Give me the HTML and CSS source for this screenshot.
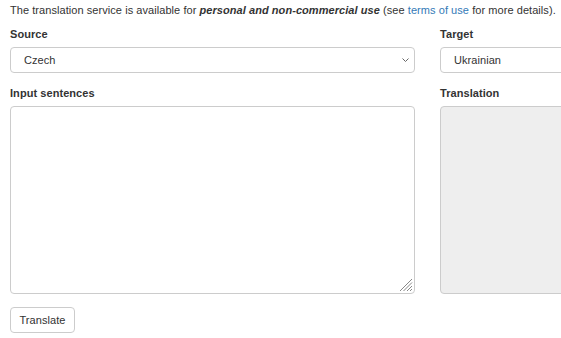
FILE: index.html
```html
<!DOCTYPE html>
<html lang="en">
<head>
    <meta charset="UTF-8">
    <title>Translation</title>
    <link rel="stylesheet" href="styles.css">
</head>
<body>
    <p class="notice">The translation service is available for <em>personal and non-commercial use</em> (see <a href="#">terms of use</a> for more details).</p>

    <div class="form-grid">
        <div class="field">
            <label for="source">Source</label>
            <div class="select-wrap">
                <select id="source" class="control">
                    <option>Czech</option>
                    <option>English</option>
                </select>
                <svg class="chevron" width="7" height="4" viewBox="0 0 7 4"><path d="M0.5 0.5 L3.5 3.5 L6.5 0.5" fill="none" stroke="#666" stroke-width="1"/></svg>
            </div>
        </div>
        <div class="field">
            <label for="target">Target</label>
            <select id="target" class="control">
                <option>Ukrainian</option>
                <option>English</option>
            </select>
        </div>
        <div class="field">
            <label for="input">Input sentences</label>
            <div class="area-wrap">
                <textarea id="input" class="control area"></textarea>
                <!-- resize grip -->
                <svg class="grip" width="14" height="14" viewBox="0 0 14 14">
                    <path d="M13 1 L1 13 M13 4.5 L4.5 13 M13 8 L8 13 M13 11 L11 13" stroke="#888" stroke-width="1" fill="none"/>
                </svg>
            </div>
        </div>
        <div class="field">
            <label>Translation</label>
            <div class="control area output"></div>
        </div>
    </div>

    <button class="btn" type="button">Translate</button>
</body>
</html>
```

FILE: styles.css
```css
body {
    font-family: "Liberation Sans", Arial, Helvetica, sans-serif;
    font-size: 11px;
    letter-spacing: 0.06px;
    color: #333;
    margin: 0;
    padding: 3px 10px 0;
    overflow: hidden;
}
.notice {
    margin: 0 0 9px;
    line-height: 15px;
    white-space: nowrap;
}
.notice em {
    font-weight: bold;
}
.notice a {
    color: #337ab7;
    text-decoration: none;
}
.form-grid {
    display: grid;
    grid-template-columns: 405px 220px;
    column-gap: 25px;
}
.field {
    margin-bottom: 13px;
}
.field label {
    display: block;
    font-weight: bold;
    line-height: 15px;
    margin-bottom: 5px;
}
.control {
    display: block;
    box-sizing: border-box;
    width: 100%;
    height: 26px;
    border: 1px solid #ccc;
    border-radius: 4px;
    background-color: #fff;
    font-family: inherit;
    font-size: 11px;
    letter-spacing: inherit;
    color: #333;
    padding: 0 13px;
    appearance: none;
    -webkit-appearance: none;
    outline: none;
}
.select-wrap,
.area-wrap {
    position: relative;
}
.chevron {
    position: absolute;
    right: 6px;
    top: 11px;
}
.area {
    height: 188px;
    padding: 6px 8px;
    resize: none;
}
.grip {
    position: absolute;
    right: 2px;
    bottom: 2px;
}
.output {
    background-color: #eee;
}
.btn {
    font-family: inherit;
    font-size: 11px;
    letter-spacing: inherit;
    color: #333;
    background-color: #fff;
    border: 1px solid #ccc;
    border-radius: 4px;
    height: 26px;
    width: 65px;
    padding: 0;
    cursor: pointer;
}
```
